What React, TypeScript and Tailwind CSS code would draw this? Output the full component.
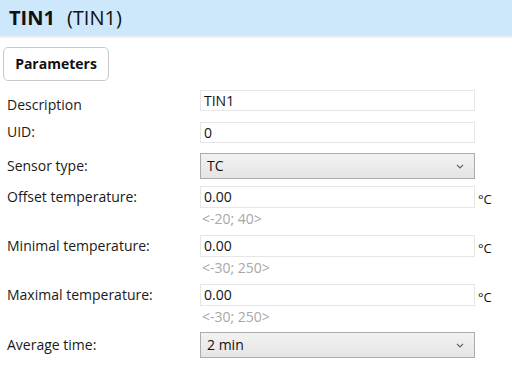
import React from 'react';

const font = { fontFamily: '"Open Sans", "Liberation Sans", sans-serif' }

const TextRow = (props: { label: string, value: string, labelClass?: string, className?: string }) => {
  return <div className={"flex h-[21px] " + (props.className || "")}>
    <div className={"w-[200px] pl-[7px] text-[14px] leading-[20px] text-[#1a1a1a] " + (props.labelClass || "")}>{props.label}</div>
    <div className="w-[275px] h-[21px] border border-[#e6e6e6] bg-white pl-[3px] text-[14px] leading-[19px] text-[#111]">{props.value}</div>
  </div>
}

const SelectRow = (props: { label: string, value: string, className?: string }) => {
  return <div className={"flex items-center h-[26px] " + (props.className || "")}>
    <div className="w-[200px] pl-[7px] text-[14px] leading-[20px] text-[#1a1a1a]">{props.label}</div>
    <div className="w-[275px] h-[26px] border border-[#acacac] bg-gradient-to-b from-[#f2f2f2] to-[#e5e5e5] flex items-center justify-between pl-[6px] pr-[10px] text-[14px] leading-[20px] text-[#111]">
      <span>{props.value}</span>
      <svg width="8" height="5" viewBox="0 0 8 5" fill="none">
        <path d="M1 1 L4 4 L7 1" stroke="#666" strokeWidth="1.2" />
      </svg>
    </div>
  </div>
}

const TempRow = (props: { label: string, range: string, className?: string }) => {
  return <div className={"flex " + (props.className || "")}>
    <div className="w-[200px] pl-[7px] pt-[1px] text-[14px] leading-[20px] text-[#1a1a1a]">{props.label}</div>
    <div className="flex flex-col">
      <div className="flex h-[22px]">
        <div className="w-[275px] h-[22px] border border-[#e6e6e6] bg-white pl-[3px] text-[14px] leading-[20px] text-[#111]">0.00</div>
        <span className="ml-[3px] mt-[3px] text-[13px] leading-[20px] text-[#111]">°C</span>
      </div>
      <div className="pl-[2px] mt-[3px] text-[14px] leading-[16px] text-[#a8a8a8]">{props.range}</div>
    </div>
  </div>
}

export default function App() {
  return <div style={font} className="w-[512px] h-[367px] bg-white overflow-hidden">
    <div className="h-[38px] bg-[#cce8fa] border-b-2 border-[#eceeef] flex items-center pl-[9px] text-[20px] leading-[28px] text-[#111]">
      <span className="font-bold">TIN1</span>
      <span className="ml-[12px] font-normal">(TIN1)</span>
    </div>
    <div className="pt-[9px] pl-[3px]">
      <div className="w-[106px] h-[34px] border border-[#c9c9c9] rounded-[5px] flex items-center justify-center text-[14px] leading-[20px] font-bold text-[#111]">Parameters</div>
    </div>
    <TextRow className="mt-[9px]" label="Description" value="TIN1" labelClass="pt-[5px]" />
    <TextRow className="mt-[11px]" label="UID:" value="0" />
    <SelectRow className="mt-[10px]" label="Sensor type:" value="TC" />
    <TempRow className="mt-[7px]" label="Offset temperature:" range="<-20; 40>" />
    <TempRow className="mt-[8px]" label="Minimal temperature:" range="<-30; 250>" />
    <TempRow className="mt-[8px]" label="Maximal temperature:" range="<-30; 250>" />
    <SelectRow className="mt-[7px]" label="Average time:" value="2 min" />
  </div>
}
